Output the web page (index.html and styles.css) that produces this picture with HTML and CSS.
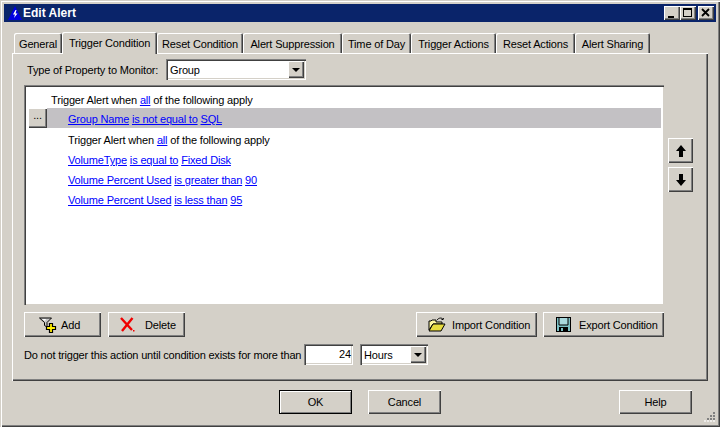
FILE: index.html
```html
<!DOCTYPE html>
<html lang="en">
<head>
<meta charset="utf-8">
<title>Edit Alert</title>
<link rel="stylesheet" href="styles.css">
</head>
<body>
<div class="window">
  <div class="titlebar">
    <svg class="app-icon" width="16" height="16" viewBox="0 0 16 16"><path d="M8 1 L15 15 H1 Z" fill="#0000e0"/><path d="M8.500 5 L6 9.500 H8 L7 13 L10.500 8.500 H8.500 L9.500 5 Z" fill="#fff"/></svg>
    <span class="title">Edit Alert</span>
    <div class="caption-buttons">
      <div class="cap"><svg width="16" height="14" viewBox="0 0 16 14"><rect x="4" y="10" width="6" height="2" fill="#000"/></svg></div>
      <div class="cap"><svg width="16" height="14" viewBox="0 0 16 14"><path d="M3 2h9v9H3z M4 4v6h7V4z" fill="#000" fill-rule="evenodd"/></svg></div>
      <div class="cap cap-close"><svg width="16" height="14" viewBox="0 0 16 14"><path d="M4 3 L11 10 M11 3 L4 10" stroke="#000" stroke-width="1.800" fill="none"/></svg></div>
    </div>
  </div>

  <div class="tabs">
    <div class="tab t-general">General</div>
    <div class="tab active t-trigger">Trigger Condition</div>
    <div class="tab t-reset">Reset Condition</div>
    <div class="tab t-supp">Alert Suppression</div>
    <div class="tab t-time">Time of Day</div>
    <div class="tab t-tact">Trigger Actions</div>
    <div class="tab t-ract">Reset Actions</div>
    <div class="tab t-share">Alert Sharing</div>
  </div>

  <div class="panel">
    <div class="type-row">
      <label class="type-label">Type of Property to Monitor:</label>
      <div class="combo type-combo"><span class="combo-text">Group</span><span class="combo-btn"><i class="caret"></i></span></div>
    </div>

    <div class="list-row">
      <div class="list">
        <div class="cond cond-top">Trigger Alert when <a>all</a> of the following apply</div>
        <div class="cond selected"><span class="dots">...</span><span class="cond-text"><a>Group Name</a> <a>is not equal to</a> <a>SQL</a></span></div>
        <div class="cond nested">Trigger Alert when <a>all</a> of the following apply</div>
        <div class="cond nested"><a>VolumeType</a> <a>is equal to</a> <a>Fixed Disk</a></div>
        <div class="cond nested"><a>Volume Percent Used</a> <a>is greater than</a> <a>90</a></div>
        <div class="cond nested"><a>Volume Percent Used</a> <a>is less than</a> <a>95</a></div>
      </div>
      <div class="move-buttons">
        <div class="btn move"><svg width="12" height="14" viewBox="0 0 12 14"><path d="M6 1 L11 7 H8 V13 H4 V7 H1 Z" fill="#000"/></svg></div>
        <div class="btn move"><svg width="12" height="14" viewBox="0 0 12 14"><path d="M6 13 L11 7 H8 V1 H4 V7 H1 Z" fill="#000"/></svg></div>
      </div>
    </div>

    <div class="action-row">
      <div class="btn act act-add">
        <svg width="18" height="18" viewBox="0 0 18 18"><path d="M0.500 2 H12.500 L8 6.500 V11 L5.500 9.500 V6.500 Z" fill="#c8c8c8" stroke="#000" stroke-width="1"/><path d="M3 3 H7 L6 5 Z" fill="#fff"/><path d="M10.500 7.500 h3 v3 h3 v3 h-3 v3 h-3 v-3 h-3 v-3 h3 Z" fill="#ffee00" stroke="#000" stroke-width="1.200"/></svg>
        <span>Add</span>
      </div>
      <div class="btn act act-del">
        <svg width="16" height="15" viewBox="0 0 16 15"><path d="M1 1 L12 13 M12.500 1 L2 14" stroke="#f00000" stroke-width="2.400" fill="none"/><rect x="13" y="13" width="1.500" height="1.500" fill="#f00000"/></svg>
        <span>Delete</span>
      </div>
      <div class="btn act act-imp">
        <svg width="18" height="15" viewBox="0 0 18 15"><path d="M1 13 V4 H3 L4 3 H8 V5 H14 V7 H5 L1 13 Z" fill="#fff8a0" stroke="#000" stroke-width="1"/><path d="M1 14 H13 L17 7 H5 Z" fill="#e8dc40" stroke="#000" stroke-width="1"/><path d="M9 3 C11 0.500 14 0.500 15 2.500 M15 2.500 L13.500 2.500 M15 2.500 L15.500 1" stroke="#000" fill="none"/></svg>
        <span>Import Condition</span>
      </div>
      <div class="btn act act-exp">
        <svg width="15" height="15" viewBox="0 0 15 15"><rect width="15" height="15" fill="#000"/><rect x="1" y="1" width="13" height="13" fill="#7cc0c4"/><path d="M3 1 V8 H12 V1" fill="#a8d8dc" stroke="#000" stroke-width="1"/><rect x="3" y="10" width="9" height="5" fill="#000"/><rect x="5" y="11" width="2" height="3" fill="#7cc0c4"/></svg>
        <span>Export Condition</span>
      </div>
    </div>

    <div class="delay-row">
      <span class="delay-label">Do not trigger this action until condition exists for more than</span>
      <div class="field delay-input">24</div>
      <div class="combo unit-combo"><span class="combo-text">Hours</span><span class="combo-btn"><i class="caret"></i></span></div>
    </div>
  </div>

  <div class="footer">
    <div class="btn foot default">OK</div>
    <div class="btn foot cancel">Cancel</div>
    <div class="btn foot help">Help</div>
  </div>

  <svg class="grip" width="12" height="12" viewBox="0 0 12 12"><path d="M9 1h2v2H9z M6 4h2v2H6z M9 4h2v2H9z M3 7h2v2H3z M6 7h2v2H6z M9 7h2v2H9z" fill="#808080"/><path d="M9 9h2v2H9z M6 9h2v2H6z M3 9h2v2H3z M0 9h2v2H0z" fill="#fff" opacity=".6"/></svg>
</div>
</body>
</html>
```
FILE: styles.css
```css
* { box-sizing: border-box; }
html, body { margin: 0; padding: 0; }
body {
  width: 720px;
  height: 427px;
  overflow: hidden;
  background: #d4d0c8;
  font-family: "Liberation Sans", Arial, sans-serif;
  font-size: 11px;
  letter-spacing: -0.16px;
  color: #000;
}
.window {
  position: relative;
  width: 720px;
  height: 427px;
  padding: 4px;
  background: #d4d0c8;
  box-shadow: inset 1px 1px 0 #d4d0c8, inset 2px 2px 0 #fff, inset -1px -1px 0 #404040, inset -2px -2px 0 #808080;
}
.titlebar {
  display: flex;
  align-items: center;
  height: 18px;
  background: #0a246a;
  color: #fff;
  padding: 0 2px 0 3px;
}
.app-icon { flex: none; }
.title {
  font-weight: bold;
  font-size: 12px;
  letter-spacing: 0;
}
.caption-buttons { display: flex; margin-left: auto; }
.cap {
  width: 16px;
  height: 14px;
  background: #d4d0c8;
  box-shadow: inset 1px 1px 0 #fff, inset -1px -1px 0 #404040, inset -2px -2px 0 #808080;
}
.cap svg { display: block; }
.cap-close { margin-left: 2px; }

.tabs {
  display: flex;
  align-items: flex-end;
  height: 31px;
  margin-left: 10px;
  position: relative;
}
.tab {
  height: 20px;
  padding-top: 5px;
  text-align: center;
  white-space: nowrap;
  border-radius: 2px 2px 0 0;
  box-shadow: inset 1px 1px 0 #fff, inset -1px 0 0 #404040, inset -2px 0 0 #808080;
}
.tab.active {
  height: 22px;
  padding-top: 5px;
  margin-bottom: -1px;
  position: relative;
  z-index: 2;
  background: #d4d0c8;
}
.t-general { width: 48px; }
.t-trigger { width: 95px; }
.t-reset { width: 86px; }
.t-supp { width: 99px; }
.t-time { width: 69px; }
.t-tact { width: 85px; }
.t-ract { width: 79px; }
.t-share { width: 75px; }

.panel {
  width: 696px;
  height: 328px;
  margin-left: 8px;
  padding: 6px 12px 0 12px;
  box-shadow: inset 1px 1px 0 #fff, inset -1px -1px 0 #404040, inset -2px -2px 0 #808080;
}
.type-row {
  display: flex;
  align-items: center;
  height: 21px;
  padding-left: 3px;
}
.type-label { width: 139px; white-space: nowrap; }
.combo {
  display: flex;
  align-items: center;
  height: 21px;
  background: #fff;
  box-shadow: inset 1px 1px 0 #808080, inset 2px 2px 0 #404040, inset -1px -1px 0 #fff, inset -2px -2px 0 #d4d0c8;
  padding: 2px;
}
.combo-text { flex: 1; padding-left: 2px; }
.combo-btn {
  display: flex;
  align-items: center;
  justify-content: center;
  width: 16px;
  height: 17px;
  background: #d4d0c8;
  box-shadow: inset 1px 1px 0 #fff, inset -1px -1px 0 #404040, inset -2px -2px 0 #808080;
}
.caret {
  width: 0;
  height: 0;
  border-left: 4px solid transparent;
  border-right: 4px solid transparent;
  border-top: 4px solid #000;
}
.type-combo { width: 140px; }
.list-row {
  display: flex;
  align-items: flex-start;
  margin-top: 5px;
}
.list {
  width: 640px;
  height: 220px;
  padding: 5px 3px 0 2px;
  background: #fff;
  box-shadow: inset 1px 1px 0 #808080, inset 2px 2px 0 #404040, inset -1px -1px 0 #d4d0c8;
  flex: none;
}
.cond {
  height: 20px;
  line-height: 20px;
  white-space: nowrap;
}
.cond a {
  color: #0000ff;
  text-decoration: underline;
}
.cond-top { padding-left: 25px; }
.nested { padding-left: 42px; }
.selected {
  display: flex;
  background: #c3c1c4;
  margin-top: -2px;
  margin-bottom: 2px;
  margin-left: 2px;
}
.dots {
  width: 19px;
  height: 20px;
  line-height: 14px;
  text-align: center;
  background: #d4d0c8;
  box-shadow: inset 1px 1px 0 #fff, inset -1px -1px 0 #404040, inset -2px -2px 0 #808080;
}
.cond-text { padding: 1px 0 0 21px; letter-spacing: -0.19px; }
.move-buttons {
  display: flex;
  flex-direction: column;
  gap: 4px;
  margin: 53px 0 0 4px;
}
.btn {
  display: flex;
  align-items: center;
  justify-content: center;
  background: #d4d0c8;
  white-space: nowrap;
  box-shadow: inset 1px 1px 0 #fff, inset -1px -1px 0 #404040, inset -2px -2px 0 #808080;
}
.move { width: 25px; height: 25px; }
.action-row {
  display: flex;
  gap: 7px;
  margin-top: 7px;
  width: 640px;
}
.act {
  height: 25px;
  justify-content: flex-start;
}
.act-add { width: 77px; padding-left: 15px; }
.act-add span { margin-left: 4px; }
.act-del { width: 77px; padding-left: 12px; }
.act-del span { margin-left: 9px; }
.act-imp { width: 121px; padding-left: 12px; margin-left: auto; }
.act-imp span { margin-left: 6px; }
.act-exp { width: 121px; margin-left: -1px; padding-left: 13px; }
.act-exp span { margin-left: 8px; }
.delay-row {
  display: flex;
  align-items: center;
  height: 21px;
  margin-top: 7px;
}
.delay-label { width: 280px; white-space: nowrap; letter-spacing: -0.19px; }
.field {
  height: 21px;
  background: #fff;
  text-align: right;
  line-height: 20px;
  padding-right: 2px;
  box-shadow: inset 1px 1px 0 #808080, inset 2px 2px 0 #404040, inset -1px -1px 0 #fff, inset -2px -2px 0 #d4d0c8;
}
.delay-input { width: 49px; }
.unit-combo { width: 68px; margin-left: 7px; }
.footer {
  display: flex;
  height: 24px;
  margin-top: 9px;
  padding-left: 275px;
}
.foot { width: 73px; height: 24px; }
.default { box-shadow: inset 0 0 0 1px #000, inset 2px 2px 0 #fff, inset -2px -2px 0 #808080; }
.cancel { margin-left: 16px; }
.help { margin-left: 178px; }
.grip { position: absolute; right: 4px; bottom: 4px; }
```
